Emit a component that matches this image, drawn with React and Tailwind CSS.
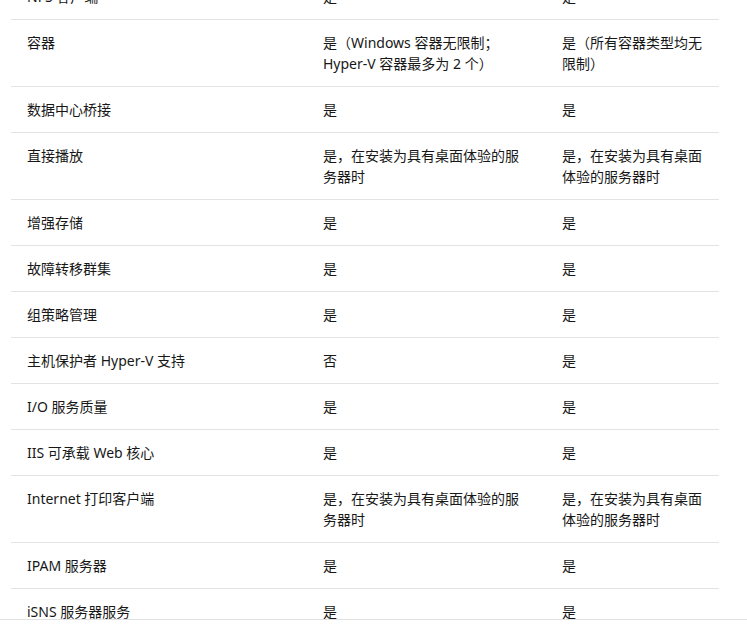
const rows = [
  ["NFS 客户端", "是", "是"],
  ["容器", "是（Windows 容器无限制；Hyper-V 容器最多为 2 个）", "是（所有容器类型均无限制）"],
  ["数据中心桥接", "是", "是"],
  ["直接播放", "是，在安装为具有桌面体验的服务器时", "是，在安装为具有桌面体验的服务器时"],
  ["增强存储", "是", "是"],
  ["故障转移群集", "是", "是"],
  ["组策略管理", "是", "是"],
  ["主机保护者 Hyper-V 支持", "否", "是"],
  ["I/O 服务质量", "是", "是"],
  ["IIS 可承载 Web 核心", "是", "是"],
  ["Internet 打印客户端", "是，在安装为具有桌面体验的服务器时", "是，在安装为具有桌面体验的服务器时"],
  ["IPAM 服务器", "是", "是"],
  ["iSNS 服务器服务", "是", "是"],
];

export default function App() {
  return (
    <div className="w-[747px] h-[629px] bg-white overflow-hidden">
      <div
        className="h-[620px] overflow-hidden border-b border-[#e1e1e1] text-[14px] leading-[21px] text-[#171717]"
        style={{ fontFamily: '"Noto Sans", "Noto Sans CJK SC", sans-serif' }}
      >
        <table className="-mt-[26px] ml-[11px] w-[708px] table-fixed border-collapse">
          <colgroup>
            <col className="w-[296px]" />
            <col className="w-[239px]" />
            <col className="w-[173px]" />
          </colgroup>
          <tbody>
            {rows.map((r, i) => (
              <tr key={i} className="border-b border-[#e3e3e3]">
                {r.map((c, j) => (
                  <td key={j} className="align-top pl-4 pr-4 py-3">
                    {c}
                  </td>
                ))}
              </tr>
            ))}
          </tbody>
        </table>
      </div>
    </div>
  );
}
